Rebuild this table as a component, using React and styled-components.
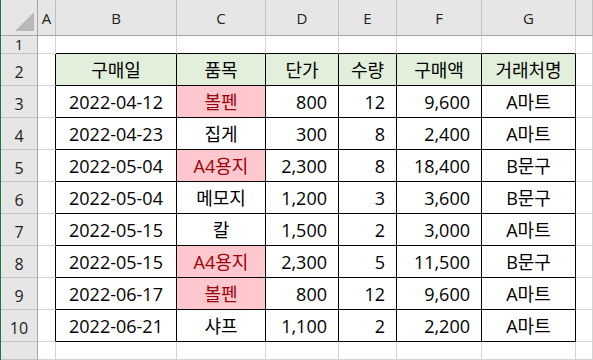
import React from 'react';
import styled, { createGlobalStyle } from 'styled-components';

const GlobalStyle = createGlobalStyle`
  html, body { margin: 0; padding: 0; background: #fff; }
  body { font-family: "Open Sans", "Noto Sans CJK KR", sans-serif; overflow: hidden; }
`;

const Sheet = styled.div`
  display: grid;
  grid-template-columns: 37px 18px 121px 89px 73px 58px 85px 94px 1fr;
  grid-template-rows: 36px 18px repeat(9, 32px) 1fr;
  width: 593px;
  height: 360px;
  box-sizing: border-box;
  border-left: 1px solid #217346;
  overflow: hidden;
`;

const Corner = styled.div`
  box-sizing: border-box;
  background: #e6e6e6;
  border-right: 1px solid #a6a6a6;
  border-bottom: 1px solid #a6a6a6;
  display: flex;
  align-items: flex-end;
  justify-content: flex-end;
  padding: 0 3px 4px 0;
`;

const ColHead = styled.div`
  box-sizing: border-box;
  background: #e6e6e6;
  border-right: 1px solid #c0c0c0;
  border-bottom: 1px solid #a6a6a6;
  display: flex;
  align-items: flex-end;
  justify-content: center;
  padding-bottom: 7px;
  font-size: 15px;
  line-height: 20px;
  color: #222;
`;

const RowHead = styled.div`
  box-sizing: border-box;
  background: #e6e6e6;
  border-right: 1px solid #a6a6a6;
  border-bottom: 1px solid #c4c4c4;
  display: flex;
  align-items: ${p => (p.$short ? 'center' : 'flex-end')};
  justify-content: center;
  padding-bottom: ${p => (p.$short ? 1 : 3)}px;
  font-size: ${p => (p.$short ? 15 : 16)}px;
  line-height: ${p => (p.$short ? 16 : 20)}px;
  color: #222;
`;

const Cell = styled.div`
  box-sizing: border-box;
  display: flex;
  align-items: flex-end;
  justify-content: ${p => (p.$right ? 'flex-end' : 'center')};
  padding: 0 ${p => (p.$right ? 11 : 0)}px 5px 0;
  border-right: 1px solid ${p => (p.$rb ? '#000' : '#d4d4d4')};
  border-bottom: 1px solid ${p => (p.$bb ? '#000' : '#d4d4d4')};
  background: ${p => (p.$fill === 'head' ? '#e2efda' : p.$fill === 'pink' ? '#ffc7ce' : '#fff')};
  color: ${p => (p.$fill === 'pink' ? '#9c0006' : '#000')};
  font-size: 18px;
  line-height: 20px;
  white-space: nowrap;
  overflow: hidden;
`;

const CornerMark = () => (
  <svg width="19" height="19" viewBox="0 0 19 19">
    <polygon points="19,0 19,19 0,19" fill="#b8b8b8" />
  </svg>
);

const LETTERS = ['A', 'B', 'C', 'D', 'E', 'F', 'G', ''];
const HEADERS = ['구매일', '품목', '단가', '수량', '구매액', '거래처명'];
const RIGHT = [false, false, true, true, true, false];

const DATA = [
  ['2022-04-12', '볼펜', '800', '12', '9,600', 'A마트', true],
  ['2022-04-23', '집게', '300', '8', '2,400', 'A마트', false],
  ['2022-05-04', 'A4용지', '2,300', '8', '18,400', 'B문구', true],
  ['2022-05-04', '메모지', '1,200', '3', '3,600', 'B문구', false],
  ['2022-05-15', '칼', '1,500', '2', '3,000', 'A마트', false],
  ['2022-05-15', 'A4용지', '2,300', '5', '11,500', 'B문구', true],
  ['2022-06-17', '볼펜', '800', '12', '9,600', 'A마트', true],
  ['2022-06-21', '샤프', '1,100', '2', '2,200', 'A마트', false],
];

export default function App() {
  const cells = [];
  cells.push(
    <Corner key="corner">
      <CornerMark />
    </Corner>
  );
  LETTERS.forEach((l, i) => cells.push(<ColHead key={`h${i}`}>{l}</ColHead>));

  cells.push(<RowHead key="r1" $short>1</RowHead>);
  for (let c = 0; c < 8; c++) {
    cells.push(<Cell key={`r1c${c}`} $bb={c >= 1 && c <= 6} />);
  }

  cells.push(<RowHead key="r2">2</RowHead>);
  cells.push(<Cell key="r2a" $rb />);
  HEADERS.forEach((h, i) =>
    cells.push(
      <Cell key={`r2h${i}`} $fill="head" $rb $bb>
        {h}
      </Cell>
    )
  );
  cells.push(<Cell key="r2h" />);

  DATA.forEach((row, r) => {
    const n = r + 3;
    cells.push(<RowHead key={`r${n}`}>{n}</RowHead>);
    cells.push(<Cell key={`r${n}a`} $rb />);
    for (let c = 0; c < 6; c++) {
      cells.push(
        <Cell
          key={`r${n}c${c}`}
          $rb
          $bb
          $right={RIGHT[c]}
          $fill={c === 1 && row[6] ? 'pink' : undefined}
        >
          {row[c]}
        </Cell>
      );
    }
    cells.push(<Cell key={`r${n}h`} />);
  });

  cells.push(<RowHead key="r11" />);
  for (let c = 0; c < 8; c++) cells.push(<Cell key={`r11c${c}`} />);

  return (
    <>
      <GlobalStyle />
      <Sheet>{cells}</Sheet>
    </>
  );
}
